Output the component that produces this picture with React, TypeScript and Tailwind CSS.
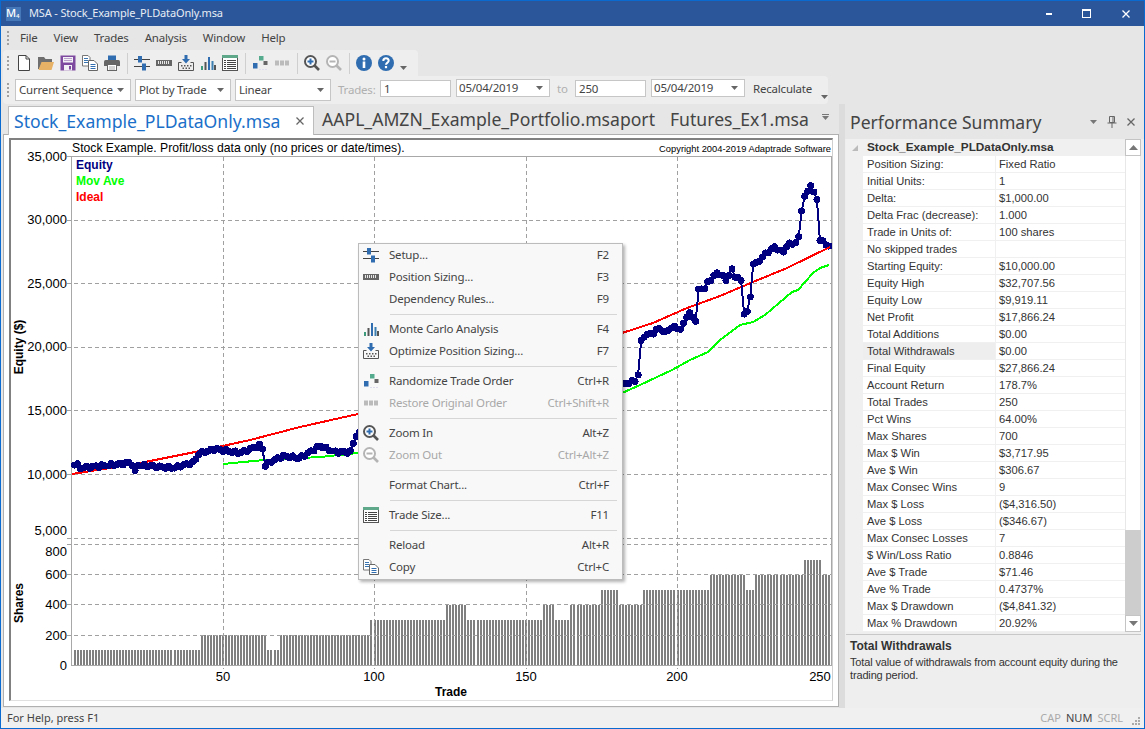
import type { ReactNode } from 'react';

// ---- chart data, in page pixels ----
type Pt = [number, number];

const EQUITY: Pt[] = [
  [72, 466], [76, 463], [80, 468], [100, 466], [130, 463], [133, 465], [134.5, 474], [137, 465], [150, 466], [173, 468],
  [195, 462], [197, 454], [215, 449], [240, 453], [258, 446], [262, 444], [264, 467], [270, 462], [283, 456], [300, 458],
  [320, 446], [335, 452], [352, 452], [354, 438], [358, 434], [400, 420], [500, 400], [600, 390], [622, 385], [637, 380],
  [639, 370], [641, 342], [644, 336], [653, 333], [660, 328], [665, 333], [670, 328], [677, 327], [680, 331], [683, 325],
  [686, 318], [688, 312], [696, 321], [699, 287], [705, 289], [708, 282], [713, 277], [718, 272], [726, 280], [732, 270],
  [735, 276], [741, 279], [743, 313], [749, 312], [753, 263], [757, 264], [762, 257], [770, 250], [775, 247], [783, 253],
  [787, 245], [797, 242], [799, 237], [803, 197], [806, 197], [810, 185], [812, 184], [815, 199], [817, 199], [820, 241],
  [825, 243], [830, 247],
];

const MOV_AVE: Pt[] = [
  [223, 464], [264, 460], [320, 457], [358, 453], [450, 430], [622, 393], [640, 385], [672, 370], [690, 360], [708, 352],
  [720, 340], [740, 325], [753, 322], [765, 315], [792, 292], [798, 290], [813, 273], [820, 268], [829, 265],
];

const IDEAL: Pt[] = [
  [72, 474], [135, 464], [200, 451], [250, 440], [300, 427], [358, 414], [622, 333], [653, 323], [687, 308], [720, 296],
  [753, 282], [787, 268], [830, 247],
];

const SHARE_STEPS: Pt[] = [
  [200, 100], [266, 200], [279, 100], [370, 200], [446, 300], [467, 400], [543, 300], [556, 400], [570, 300], [600, 400],
  [618, 500], [643, 400], [710, 500], [745, 600], [755, 500], [803, 600], [821, 700], [900, 600],
];

function interp(points: Pt[], x: number) {
  for (let i = 1; i < points.length; i++) {
    if (x <= points[i][0]) {
      const [x0, y0] = points[i - 1];
      const [x1, y1] = points[i];
      return y0 + ((y1 - y0) * (x - x0)) / (x1 - x0);
    }
  }
  return points[points.length - 1][1];
}

const trades = Array.from({ length: 250 }, (_, i) => i + 1);
const equityPts = trades.map((t) => {
  const x = 71.5 + 3.03 * t;
  return [x, interp(EQUITY, x) + Math.sin(t * 2.3) * 1.3] as Pt;
});
const toLine = (pts: Pt[]) => pts.map((p) => p.join(',')).join(' ');

const Y_GRID = [220, 283.5, 347, 410.5, 474, 538.5, 544.5, 574.5, 604.5, 635];
const X_GRID = [223, 374.5, 526, 677.5];
const Y_LABELS: [string, number][] = [
  ['35,000', 161], ['30,000', 224], ['25,000', 288], ['20,000', 351], ['15,000', 415], ['10,000', 479], ['5,000', 535],
  ['800', 556], ['600', 579], ['400', 609], ['200', 640], ['0', 670],
];
const X_LABELS: [string, number][] = [['50', 223], ['100', 374], ['150', 526], ['200', 677], ['250', 820]];

function Chart() {
  return (
    <svg viewBox="11 140 821 560" className="block w-[821px] h-[560px] font-['Liberation_Sans',sans-serif]">
      {trades.map((t) => {
        const x = Math.round(70.5 + 3.03 * t);
        const mid = x + 1;
        const share = SHARE_STEPS.find((s) => mid < s[0])?.[1] ?? 600;
        const h = share * 0.15;
        return <rect key={t} x={x} y={665 - h} width={2} height={h} fill="#808080" shapeRendering="crispEdges" />;
      })}
      {Y_GRID.map((y) => (
        <line key={y} x1={67} x2={832} y1={y} y2={y} stroke="#a0a0a0" strokeDasharray="4 3" shapeRendering="crispEdges" />
      ))}
      {X_GRID.map((x) => (
        <line key={x} x1={x} x2={x} y1={157} y2={669} stroke="#a0a0a0" strokeDasharray="4 3" shapeRendering="crispEdges" />
      ))}
      <path d="M67 156.5H831.5V665M71.5 156V665.5H832" fill="none" stroke="#a8a8a8" shapeRendering="crispEdges" />
      <polyline points={toLine(IDEAL)} fill="none" stroke="#ff0000" strokeWidth={2} shapeRendering="crispEdges" />
      <polyline points={toLine(MOV_AVE.slice(0, 4))} fill="none" stroke="#00ff00" strokeWidth={2} shapeRendering="crispEdges" />
      <polyline points={toLine(MOV_AVE.slice(4))} fill="none" stroke="#00ff00" strokeWidth={2} shapeRendering="crispEdges" />
      <polyline points={toLine(equityPts)} fill="none" stroke="#000080" strokeWidth={2} shapeRendering="crispEdges" />
      {equityPts.map(([x, y], i) => (
        <circle key={i} cx={x} cy={y} r={3.5} fill="#000080" shapeRendering="crispEdges" />
      ))}
      <polyline points={toLine(IDEAL.slice(-2))} fill="none" stroke="#ff0000" strokeWidth={2} shapeRendering="crispEdges" />

      <text x={72} y={151.5} className="text-[12.2px] fill-black">
        Stock Example. Profit/loss data only (no prices or date/times).
      </text>
      <text x={831} y={151.5} textAnchor="end" className="text-[9.35px] fill-black">
        Copyright 2004-2019 Adaptrade Software
      </text>
      <text x={76} y={169} className="text-[12px] font-bold fill-[#000080]">Equity</text>
      <text x={76} y={185} className="text-[12px] font-bold fill-[#00ff00]">Mov Ave</text>
      <text x={76} y={201} className="text-[12px] font-bold fill-[#ff0000]">Ideal</text>
      {Y_LABELS.map(([label, y]) => (
        <text key={label} x={67} y={y} textAnchor="end" className="text-[13px] fill-black">{label}</text>
      ))}
      {X_LABELS.map(([label, x]) => (
        <text key={label} x={x} y={681} textAnchor="middle" className="text-[13px] fill-black">{label}</text>
      ))}
      <text transform="translate(23 347) rotate(-90)" textAnchor="middle" className="text-[12px] font-bold fill-black">Equity ($)</text>
      <text transform="translate(23 603) rotate(-90)" textAnchor="middle" className="text-[12px] font-bold fill-black">Shares</text>
      <text x={451} y={696} textAnchor="middle" className="text-[12px] font-bold fill-black">Trade</text>
    </svg>
  );
}

// ---- icons ----
const Ico = ({ children, size = 16 }: { children: ReactNode; size?: number }) => (
  <svg viewBox="0 0 16 16" width={size} height={size} className="block shrink-0">{children}</svg>
);

const NewIcon = () => (
  <Ico>
    <path d="M2.5.5H10L13.5 4V15.5H2.5Z" fill="#fff" stroke="#444" />
    <path d="M10 .5V4H13.5" fill="none" stroke="#444" />
  </Ico>
);
const OpenIcon = () => (
  <Ico>
    <path d="M0 2H6L7.5 4H14V8H4L1 14H0Z" fill="#6f6f6f" />
    <path d="M3.5 7H16L13.5 15H0.5Z" fill="#e8b266" />
  </Ico>
);
const SaveIcon = () => (
  <Ico>
    <rect x="0.5" y="0.5" width="15" height="15" fill="#7e4aa0" />
    <rect x="3" y="2" width="10" height="5.5" fill="#f3f0f6" />
    <rect x="4" y="10" width="8" height="5.5" fill="#f3f0f6" />
    <rect x="9" y="11" width="2" height="3.5" fill="#7e4aa0" />
    <path d="M4 3.5H12M4 5.5H12" stroke="#b9a0cb" />
  </Ico>
);
const CopyIcon = () => (
  <Ico>
    <path d="M.5.5H6L8 2.5V11H.5Z" fill="#fff" stroke="#777" />
    <path d="M2 3.5H6M2 5.5H6M2 7.5H6" stroke="#3a74b0" />
    <path d="M6.5 5.5H12L15.5 9V15.5H6.5Z" fill="#fff" stroke="#666" />
    <path d="M8.5 9.5H13.5M8.5 11.5H13.5M8.5 13.5H13.5" stroke="#2f6db0" />
  </Ico>
);
const PrintIcon = () => (
  <Ico>
    <rect x="4" y="0.5" width="8" height="4.5" fill="#2f6db0" />
    <path d="M1.5 5H14.5Q16 5 16 7V11H0V7Q0 5 1.5 5Z" fill="#666" />
    <rect x="3.5" y="9.5" width="9" height="6" fill="#fff" stroke="#666" />
    <path d="M5 12H11M5 14H11" stroke="#aaa" />
  </Ico>
);
const SetupIcon = () => (
  <Ico>
    <path d="M0 4.5H16M0 11.5H16" stroke="#444" />
    <rect x="4" y="1" width="4" height="6.5" fill="#2f6db0" />
    <rect x="8" y="8.5" width="4" height="7" fill="#2f6db0" />
  </Ico>
);
const RulerIcon = () => (
  <Ico>
    <rect x="0" y="5" width="16" height="6" fill="#666" />
    {[2, 4, 6, 8, 10, 12].map((x) => (
      <rect key={x} x={x} y="6" width="1" height="3" fill="#e8e8e8" />
    ))}
  </Ico>
);
const OptimizeIcon = () => (
  <Ico>
    <path d="M.5 7.5H3.5M12.5 7.5H15.5V15.5H.5V7.5" fill="none" stroke="#555" />
    <path d="M6.5 0H9.5V4H12L8 8.5L4 4H6.5Z" fill="#2f6db0" />
    {[3, 6, 9, 12].map((x) => (
      <rect key={x} x={x} y="10" width="1.5" height="1.5" fill="#555" />
    ))}
    {[4.5, 7.5, 10.5].map((x) => (
      <rect key={x} x={x} y="12.5" width="1.5" height="1.5" fill="#555" />
    ))}
  </Ico>
);
const BarsIcon = () => (
  <Ico>
    <rect x="1" y="11" width="2" height="4" fill="#3d9a7a" />
    <rect x="4.5" y="7" width="2" height="8" fill="#555" />
    <rect x="8" y="2" width="2" height="13" fill="#2f6db0" />
    <rect x="11.5" y="6" width="2" height="9" fill="#3d7fb0" />
    <rect x="14" y="10" width="2" height="5" fill="#555" />
  </Ico>
);
const TableIcon = () => (
  <Ico>
    <rect x="0.5" y="0.5" width="15" height="15" fill="#fff" stroke="#555" />
    <rect x="0" y="0" width="16" height="3" fill="#5fa88a" />
    {[5.5, 7.5, 9.5, 11.5, 13.5].map((y) => (
      <g key={y}>
        <path d={`M2 ${y}H4`} stroke="#444" />
        <path d={`M5 ${y}H14`} stroke="#444" />
      </g>
    ))}
  </Ico>
);
const RandomIcon = () => (
  <Ico>
    <rect x="7" y="1" width="4.5" height="4.5" fill="#55ab8e" />
    <rect x="11.5" y="6" width="4" height="4" fill="#666" />
    <rect x="1" y="8" width="4.5" height="5.5" fill="#2f6db0" />
    <path d="M7 14.5H15" stroke="#dde" strokeDasharray="2 1" />
  </Ico>
);
const RestoreIcon = () => (
  <Ico>
    <rect x="1" y="5.5" width="4" height="5" fill="#bbb" />
    <rect x="6" y="5.5" width="4" height="5" fill="#bbb" />
    <rect x="11" y="5.5" width="4" height="5" fill="#bbb" />
  </Ico>
);
const ZoomIcon = ({ plus, dim }: { plus?: boolean; dim?: boolean }) => {
  const ring = dim ? '#b4b4b4' : '#555';
  return (
    <Ico>
      <circle cx="6.5" cy="6.5" r="5.5" fill="#fff" stroke={ring} strokeWidth="2" />
      <path d="M10.5 10.5L15 15" stroke={ring} strokeWidth="2.6" />
      <path d="M3.5 6.5H9.5" stroke={dim ? '#b4b4b4' : '#2f6db0'} strokeWidth="2" />
      {plus && <path d="M6.5 3.5V9.5" stroke="#2f6db0" strokeWidth="2" />}
    </Ico>
  );
};
const InfoIcon = () => (
  <Ico>
    <circle cx="8" cy="8" r="8" fill="#2f6db0" />
    <circle cx="8" cy="4" r="1.5" fill="#fff" />
    <rect x="6.7" y="6.5" width="2.6" height="6.5" fill="#fff" />
  </Ico>
);
const HelpIcon = () => (
  <Ico>
    <circle cx="8" cy="8" r="8" fill="#2f6db0" />
    <path d="M5.3 6Q5.3 3.3 8 3.3T10.7 5.8C10.7 7.6 8 7.6 8 9.7" fill="none" stroke="#fff" strokeWidth="2" />
    <rect x="6.9" y="11" width="2.2" height="2.2" fill="#fff" />
  </Ico>
);
const Caret = ({ color = '#666' }: { color?: string }) => (
  <svg viewBox="0 0 7 4" width={7} height={4} className="block shrink-0">
    <path d="M0 0H7L3.5 4Z" fill={color} />
  </svg>
);

const Gripper = () => (
  <div className="w-[3px] flex flex-col gap-[2px] shrink-0">
    {[0, 1, 2, 3].map((i) => (
      <div key={i} className="w-[2px] h-[2px] bg-[#a0a0a0]" />
    ))}
  </div>
);

const TbBtn = ({ children }: { children: ReactNode }) => (
  <div className="w-[22px] h-[22px] flex items-center justify-center shrink-0">{children}</div>
);
const TbSep = () => (
  <div className="w-[8px] flex justify-center shrink-0">
    <div className="w-px h-[21px] bg-[#cfcfcf]" />
  </div>
);

const Combo = ({ text, className }: { text: string; className: string }) => (
  <div className={`flex items-center justify-between whitespace-nowrap bg-white border border-[#c6c6c6] pr-[6px] text-[#444] shrink-0 ${className}`}>
    <span>{text}</span>
    <Caret />
  </div>
);

// ---- context menu ----
type MenuEntry = { label: string; key: string; icon?: ReactNode; dim?: boolean } | 'sep';

const MENU: MenuEntry[] = [
  { label: 'Setup...', key: 'F2', icon: <SetupIcon /> },
  { label: 'Position Sizing...', key: 'F3', icon: <RulerIcon /> },
  { label: 'Dependency Rules...', key: 'F9' },
  'sep',
  { label: 'Monte Carlo Analysis', key: 'F4', icon: <BarsIcon /> },
  { label: 'Optimize Position Sizing...', key: 'F7', icon: <OptimizeIcon /> },
  'sep',
  { label: 'Randomize Trade Order', key: 'Ctrl+R', icon: <RandomIcon /> },
  { label: 'Restore Original Order', key: 'Ctrl+Shift+R', icon: <RestoreIcon />, dim: true },
  'sep',
  { label: 'Zoom In', key: 'Alt+Z', icon: <ZoomIcon plus /> },
  { label: 'Zoom Out', key: 'Ctrl+Alt+Z', icon: <ZoomIcon dim />, dim: true },
  'sep',
  { label: 'Format Chart...', key: 'Ctrl+F' },
  'sep',
  { label: 'Trade Size...', key: 'F11', icon: <TableIcon /> },
  'sep',
  { label: 'Reload', key: 'Alt+R' },
  { label: 'Copy', key: 'Ctrl+C', icon: <CopyIcon /> },
];

function ContextMenu() {
  return (
    <div className="absolute left-[357px] top-[242px] w-[265px] bg-[#f8f8f8] border border-[#bcbcbc] pb-[1px] shadow-[2px_2px_3px_rgba(0,0,0,0.3)] text-[11.5px] tracking-[-0.2px] font-['Noto_Sans',sans-serif] z-10">
      {MENU.map((m, i) =>
        m === 'sep' ? (
          <div key={i} className="h-[8px] flex items-center pl-[31px] pr-[5px]">
            <div className="h-px w-full bg-[#d6d6d6]" />
          </div>
        ) : (
          <div key={i} className={`h-[22px] flex items-center pl-[4px] pr-[13px] ${m.dim ? 'text-[#a8a8a8]' : 'text-[#444]'}`}>
            <div className="w-[16px] flex justify-center shrink-0">{m.icon}</div>
            <span className="ml-[10px]">{m.label}</span>
            <span className="ml-auto">{m.key}</span>
          </div>
        ),
      )}
    </div>
  );
}

// ---- summary table ----
const ROWS: [string, string][] = [
  ['Position Sizing:', 'Fixed Ratio'],
  ['Initial Units:', '1'],
  ['Delta:', '$1,000.00'],
  ['Delta Frac (decrease):', '1.000'],
  ['Trade in Units of:', '100 shares'],
  ['No skipped trades', ''],
  ['Starting Equity:', '$10,000.00'],
  ['Equity High', '$32,707.56'],
  ['Equity Low', '$9,919.11'],
  ['Net Profit', '$17,866.24'],
  ['Total Additions', '$0.00'],
  ['Total Withdrawals', '$0.00'],
  ['Final Equity', '$27,866.24'],
  ['Account Return', '178.7%'],
  ['Total Trades', '250'],
  ['Pct Wins', '64.00%'],
  ['Max Shares', '700'],
  ['Max $ Win', '$3,717.95'],
  ['Ave $ Win', '$306.67'],
  ['Max Consec Wins', '9'],
  ['Max $ Loss', '($4,316.50)'],
  ['Ave $ Loss', '($346.67)'],
  ['Max Consec Losses', '7'],
  ['$ Win/Loss Ratio', '0.8846'],
  ['Ave $ Trade', '$71.46'],
  ['Ave % Trade', '0.4737%'],
  ['Max $ Drawdown', '($4,841.32)'],
  ['Max % Drawdown', '20.92%'],
];

function SummaryPanel() {
  return (
    <div className="flex-1 min-w-0 flex flex-col bg-[#eeeeee] pl-px pr-[3px]">
      <div className="h-[35px] flex items-center pl-[4px] pt-[1px] bg-[#e6e6e6] -ml-px -mr-[3px] pr-[9px]">
        <span className="text-[17.6px] text-[#444] ml-[1px]">Performance Summary</span>
        <div className="ml-auto flex items-center">
          <Caret color="#777" />
          <svg viewBox="0 0 10 12" width={10} height={12} className="ml-[10px]">
            <path d="M2.5.5H7.5V6.5H2.5ZM.5 7H9.5M5 7V12M6 1V6" fill="none" stroke="#666" />
          </svg>
          <svg viewBox="0 0 8 8" width={8} height={8} className="ml-[10px]">
            <path d="M.5.5L7.5 7.5M7.5.5L.5 7.5" stroke="#666" strokeWidth="1.3" />
          </svg>
        </div>
      </div>

      <div className="flex h-[493px] font-['Liberation_Sans',sans-serif] text-[11.2px] text-[#333]">
        <div className="flex-1 min-w-0 bg-white">
          <div className="h-[17px] flex items-center bg-[#f0f0f0]">
            <svg viewBox="0 0 6 6" width={6} height={6} className="ml-[6px]">
              <path d="M6 0V6H0Z" fill="#bbb" />
            </svg>
            <span className="ml-[9px] font-bold text-[11.8px]">Stock_Example_PLDataOnly.msa</span>
          </div>
          {ROWS.map(([name, value]) => (
            <div key={name} className="h-[17px] flex">
              <div className="w-[17px] bg-[#f0f0f0] shrink-0" />
              <div className={`w-[132px] pl-[4px] leading-[16px] border-b border-[#f0f0f0] shrink-0 ${name === 'Total Withdrawals' ? 'bg-[#eeeeee]' : ''}`}>
                {name}
              </div>
              <div className="flex-1 pl-[3px] leading-[16px] border-b border-l border-[#f0f0f0]">{value}</div>
            </div>
          ))}
        </div>
        <div className="w-[16px] flex flex-col bg-white shrink-0">
          <div className="h-[17px] border border-[#c4c4c4] flex items-center justify-center">
            <svg viewBox="0 0 9 5" width={9} height={5}><path d="M0 5L4.5 0L9 5Z" fill="#777" /></svg>
          </div>
          <div className="h-[374px] border-x border-[#e8e8e8]" />
          <div className="flex-1 bg-[#cdcdcd]" />
          <div className="h-[17px] border border-[#c4c4c4] bg-white flex items-center justify-center">
            <svg viewBox="0 0 9 5" width={9} height={5}><path d="M0 0L4.5 5L9 0Z" fill="#777" /></svg>
          </div>
        </div>
      </div>

      <div className="mt-[2px] flex-1 border-t border-[#c8c8c8] px-[4px] pt-[5px] font-['Liberation_Sans',sans-serif] text-[11px] tracking-[-0.15px] leading-[13.5px] text-[#333]">
        <div className="font-bold text-[12px] tracking-normal mb-[2px]">Total Withdrawals</div>
        <div>Total value of withdrawals from account equity during the trading period.</div>
      </div>
    </div>
  );
}

export default function App() {
  return (
    <div className="relative w-[1145px] h-[729px] overflow-hidden border border-[#0a6ad0] flex flex-col bg-[#e6e6e6] font-['Noto_Sans',sans-serif]">
      {/* title bar */}
      <div className="h-[25px] shrink-0 flex items-center bg-[#2b579a] text-[#e8edf5] text-[11px] tracking-[-0.15px]">
        <div className="ml-[5px] w-[15px] h-[14px] bg-[#4478b8] text-white text-[11px] leading-[12px] font-medium flex items-start">
          M<span className="text-[6px] leading-[7px] mt-[6px]">4</span>
        </div>
        <span className="ml-[8px]">MSA - Stock_Example_PLDataOnly.msa</span>
        <div className="ml-auto flex items-center text-white">
          <div className="w-[6px] h-[2px] bg-white" />
          <div className="ml-[30px] w-[9px] h-[9px] border border-white border-t-2" />
          <svg viewBox="0 0 8 8" width={8} height={8} className="ml-[31px] mr-[14px]">
            <path d="M.5.5L7.5 7.5M7.5.5L.5 7.5" stroke="#fff" strokeWidth="1.3" />
          </svg>
        </div>
      </div>

      {/* menu bar */}
      <div className="h-[24px] shrink-0 flex items-center pl-[6px] text-[11.5px] tracking-[-0.2px] text-[#444]">
        <Gripper />
        <div className="ml-[10px] flex gap-[16px]">
          {['File', 'View', 'Trades', 'Analysis', 'Window', 'Help'].map((m) => (
            <span key={m}>{m}</span>
          ))}
        </div>
      </div>

      {/* main toolbar */}
      <div className="h-[26px] w-[415px] ml-[2px] shrink-0 flex items-center bg-[#eeeeee] rounded-tr-[4px] rounded-tl-[4px] pl-[4px]">
        <Gripper />
        <div className="ml-[3px] flex items-center">
          <TbBtn><NewIcon /></TbBtn>
          <TbBtn><OpenIcon /></TbBtn>
          <TbBtn><SaveIcon /></TbBtn>
          <TbBtn><CopyIcon /></TbBtn>
          <TbBtn><PrintIcon /></TbBtn>
          <TbSep />
          <TbBtn><SetupIcon /></TbBtn>
          <TbBtn><RulerIcon /></TbBtn>
          <TbBtn><OptimizeIcon /></TbBtn>
          <TbBtn><BarsIcon /></TbBtn>
          <TbBtn><TableIcon /></TbBtn>
          <TbSep />
          <TbBtn><RandomIcon /></TbBtn>
          <TbBtn><RestoreIcon /></TbBtn>
          <TbSep />
          <TbBtn><ZoomIcon plus /></TbBtn>
          <TbBtn><ZoomIcon dim /></TbBtn>
          <TbSep />
          <TbBtn><InfoIcon /></TbBtn>
          <TbBtn><HelpIcon /></TbBtn>
          <div className="ml-[3px] mt-[9px]"><Caret /></div>
        </div>
      </div>

      {/* second toolbar */}
      <div className="h-[28px] w-[825px] ml-[2px] shrink-0 flex items-center bg-[#eeeeee] rounded-r-[4px] rounded-bl-[4px] pl-[4px] text-[11.5px] tracking-[-0.2px] text-[#444] whitespace-nowrap">
        <Gripper />
        <Combo text="Current Sequence" className="ml-[5px] pl-[3px] w-[116px] h-[22px]" />
        <Combo text="Plot by Trade" className="ml-[4px] pl-[3px] w-[96px] h-[22px]" />
        <Combo text="Linear" className="ml-[4px] pl-[3px] w-[96px] h-[22px]" />
        <span className="ml-[7px] w-[42px] shrink-0 text-[#b0b0b0]">Trades:</span>
        <div className="w-[71px] shrink-0 h-[17px] bg-white border border-[#c6c6c6] pl-[3px] leading-[15px] mb-[4px]">1</div>
        <Combo text="05/04/2019" className="ml-[5px] pl-[2px] w-[94px] h-[18px] mb-[4px]" />
        <span className="ml-[7px] w-[18px] shrink-0 text-[#b0b0b0] mb-[3px]">to</span>
        <div className="w-[71px] shrink-0 h-[17px] bg-white border border-[#c6c6c6] pl-[3px] leading-[15px] mb-[4px]">250</div>
        <Combo text="05/04/2019" className="ml-[5px] pl-[2px] w-[94px] h-[18px] mb-[4px]" />
        <span className="ml-[8px] mb-[3px]">Recalculate</span>
        <div className="ml-[9px] mt-[14px]"><Caret /></div>
      </div>

      {/* work area */}
      <div className="flex-1 min-h-0 flex">
        <div className="w-[838px] shrink-0 flex flex-col pl-[2px]">
          <div className="h-[30px] shrink-0 flex items-end relative z-[1] text-[17.6px] text-[#444] whitespace-nowrap">
            <div className="ml-[5px] w-[306px] h-[29px] -mb-px bg-white border border-b-0 border-[#bdbdbd] flex items-center pl-[5px] text-[#1a6fc9]">
              <span>Stock_Example_PLDataOnly.msa</span>
              <svg viewBox="0 0 8 8" width={8} height={8} className="ml-auto mr-[9px]">
                <path d="M.5.5L7.5 7.5M7.5.5L.5 7.5" stroke="#666" strokeWidth="1.3" />
              </svg>
            </div>
            <div className="h-[29px] flex items-center ml-[8px]">AAPL_AMZN_Example_Portfolio.msaport</div>
            <div className="h-[29px] flex items-center ml-[15px]">Futures_Ex1.msa</div>
            <div className="absolute left-[819px] top-[10px]">
              <div className="w-[7px] h-px bg-[#777] mb-px" />
              <Caret color="#777" />
            </div>
          </div>
          <div className="flex-1 bg-white border border-[#b0b0b0] pl-[5px] pr-[5px] pt-[3px]">
            <div className="h-[563px] border-l-2 border-t-2 border-[#808080] border-r border-b border-r-[#d0d0d0] border-b-[#e0e0e0]">
              <Chart />
            </div>
          </div>
          <div className="h-[1px] shrink-0" />
        </div>
        <div className="w-[6px] shrink-0 bg-[#dcdcdc]" />
        <SummaryPanel />
      </div>

      {/* status bar */}
      <div className="h-[20px] shrink-0 flex items-center bg-[#f0f0f0] pl-[6px] pr-[4px] text-[11px] text-[#444]">
        <span>For Help, press F1</span>
        <div className="ml-auto flex items-center gap-[5px]">
          <span className="text-[#aaaaaa]">CAP</span>
          <span>NUM</span>
          <span className="text-[#aaaaaa]">SCRL</span>
          <div className="ml-[4px] grid grid-cols-3 gap-px w-[8px] mt-[6px]">
            {[0, 1, 2, 3, 4, 5, 6, 7, 8].map((i) => (
              <div key={i} className={`w-[2px] h-[2px] ${[0, 1, 3].includes(i) ? '' : 'bg-[#aaa]'}`} />
            ))}
          </div>
        </div>
      </div>

      <ContextMenu />
    </div>
  );
}
